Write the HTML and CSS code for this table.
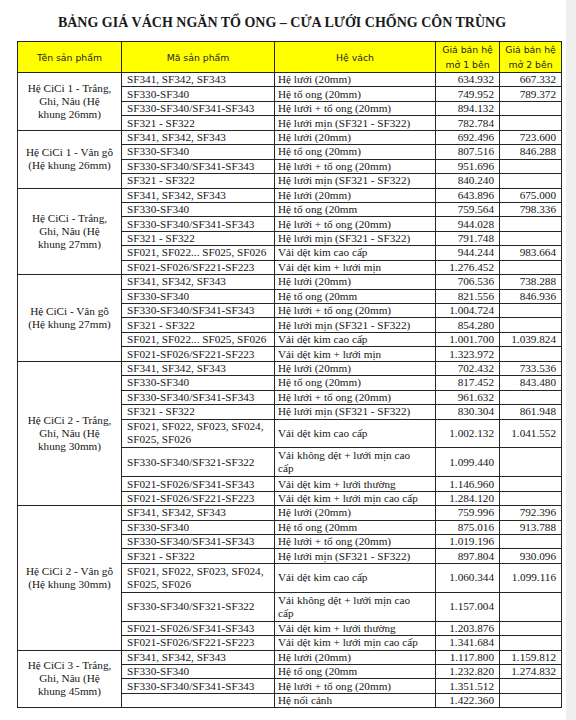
FILE: index.html
```html
<!DOCTYPE html>
<html lang="vi">
<head>
<meta charset="utf-8">
<title>Bảng giá vách ngăn tổ ong</title>
<link rel="stylesheet" href="styles.css">
</head>
<body>
<div class="page">
  <h1 class="title">BẢNG GIÁ VÁCH NGĂN TỔ ONG – CỬA LƯỚI CHỐNG CÔN TRÙNG</h1>
  <table class="price">
    <thead>
      <tr class="head">
        <th class="w1">Tên sản phẩm</th>
        <th class="w2">Mã sản phẩm</th>
        <th class="w3">Hệ vách</th>
        <th class="w4">Giá bán hệ<br>mở 1 bên</th>
        <th class="w5">Giá bán hệ<br>mở 2 bên</th>
      </tr>
    </thead>
    <tbody>
      <tr class="r"><td class="grp" rowspan="4">Hệ CiCi 1 - Trắng,<br>Ghi, Nâu (Hệ<br>khung 26mm)</td><td class="code">SF341, SF342, SF343</td><td class="sys">Hệ lưới (20mm)</td><td class="num">634.932</td><td class="num">667.332</td></tr>
      <tr class="r"><td class="code">SF330-SF340</td><td class="sys">Hệ tổ ong (20mm)</td><td class="num">749.952</td><td class="num">789.372</td></tr>
      <tr class="r"><td class="code">SF330-SF340/SF341-SF343</td><td class="sys">Hệ lưới + tổ ong (20mm)</td><td class="num">894.132</td><td class="num"></td></tr>
      <tr class="r"><td class="code">SF321 - SF322</td><td class="sys">Hệ lưới mịn (SF321 - SF322)</td><td class="num">782.784</td><td class="num"></td></tr>

      <tr class="r"><td class="grp" rowspan="4">Hệ CiCi 1 - Vân gỗ<br>(Hệ khung 26mm)</td><td class="code">SF341, SF342, SF343</td><td class="sys">Hệ lưới (20mm)</td><td class="num">692.496</td><td class="num">723.600</td></tr>
      <tr class="r"><td class="code">SF330-SF340</td><td class="sys">Hệ tổ ong (20mm)</td><td class="num">807.516</td><td class="num">846.288</td></tr>
      <tr class="r"><td class="code">SF330-SF340/SF341-SF343</td><td class="sys">Hệ lưới + tổ ong (20mm)</td><td class="num">951.696</td><td class="num"></td></tr>
      <tr class="r"><td class="code">SF321 - SF322</td><td class="sys">Hệ lưới mịn (SF321 - SF322)</td><td class="num">840.240</td><td class="num"></td></tr>

      <tr class="r"><td class="grp" rowspan="6">Hệ CiCi - Trắng,<br>Ghi, Nâu (Hệ<br>khung 27mm)</td><td class="code">SF341, SF342, SF343</td><td class="sys">Hệ lưới (20mm)</td><td class="num">643.896</td><td class="num">675.000</td></tr>
      <tr class="r"><td class="code">SF330-SF340</td><td class="sys">Hệ tổ ong (20mm</td><td class="num">759.564</td><td class="num">798.336</td></tr>
      <tr class="r"><td class="code">SF330-SF340/SF341-SF343</td><td class="sys">Hệ lưới + tổ ong (20mm)</td><td class="num">944.028</td><td class="num"></td></tr>
      <tr class="r"><td class="code">SF321 - SF322</td><td class="sys">Hệ lưới mịn (SF321 - SF322)</td><td class="num">791.748</td><td class="num"></td></tr>
      <tr class="r"><td class="code">SF021, SF022... SF025, SF026</td><td class="sys">Vải dệt kim cao cấp</td><td class="num">944.244</td><td class="num">983.664</td></tr>
      <tr class="r"><td class="code">SF021-SF026/SF221-SF223</td><td class="sys">Vải dệt kim + lưới mịn</td><td class="num">1.276.452</td><td class="num"></td></tr>

      <tr class="r"><td class="grp" rowspan="6">Hệ CiCi - Vân gỗ<br>(Hệ khung 27mm)</td><td class="code">SF341, SF342, SF343</td><td class="sys">Hệ lưới (20mm)</td><td class="num">706.536</td><td class="num">738.288</td></tr>
      <tr class="r"><td class="code">SF330-SF340</td><td class="sys">Hệ tổ ong (20mm</td><td class="num">821.556</td><td class="num">846.936</td></tr>
      <tr class="r"><td class="code">SF330-SF340/SF341-SF343</td><td class="sys">Hệ lưới + tổ ong (20mm)</td><td class="num">1.004.724</td><td class="num"></td></tr>
      <tr class="r"><td class="code">SF321 - SF322</td><td class="sys">Hệ lưới mịn (SF321 - SF322)</td><td class="num">854.280</td><td class="num"></td></tr>
      <tr class="r"><td class="code">SF021, SF022... SF025, SF026</td><td class="sys">Vải dệt kim cao cấp</td><td class="num">1.001.700</td><td class="num">1.039.824</td></tr>
      <tr class="r"><td class="code">SF021-SF026/SF221-SF223</td><td class="sys">Vải dệt kim + lưới mịn</td><td class="num">1.323.972</td><td class="num"></td></tr>

      <tr class="r"><td class="grp" rowspan="8">Hệ CiCi 2 - Trắng,<br>Ghi, Nâu (Hệ<br>khung 30mm)</td><td class="code">SF341, SF342, SF343</td><td class="sys">Hệ lưới (20mm)</td><td class="num">702.432</td><td class="num">733.536</td></tr>
      <tr class="r"><td class="code">SF330-SF340</td><td class="sys">Hệ tổ ong (20mm)</td><td class="num">817.452</td><td class="num">843.480</td></tr>
      <tr class="r"><td class="code">SF330-SF340/SF341-SF343</td><td class="sys">Hệ lưới + tổ ong (20mm)</td><td class="num">961.632</td><td class="num"></td></tr>
      <tr class="r"><td class="code">SF321 - SF322</td><td class="sys">Hệ lưới mịn (SF321 - SF322)</td><td class="num">830.304</td><td class="num">861.948</td></tr>
      <tr class="d"><td class="code">SF021, SF022, SF023, SF024,<br>SF025, SF026</td><td class="sys">Vải dệt kim cao cấp</td><td class="num">1.002.132</td><td class="num">1.041.552</td></tr>
      <tr class="d"><td class="code">SF330-SF340/SF321-SF322</td><td class="sys">Vải không dệt + lưới mịn cao<br>cấp</td><td class="num">1.099.440</td><td class="num"></td></tr>
      <tr class="r"><td class="code">SF021-SF026/SF341-SF343</td><td class="sys">Vải dệt kim + lưới thường</td><td class="num">1.146.960</td><td class="num"></td></tr>
      <tr class="r"><td class="code">SF021-SF026/SF221-SF223</td><td class="sys">Vải dệt kim + lưới mịn cao cấp</td><td class="num">1.284.120</td><td class="num"></td></tr>

      <tr class="r"><td class="grp" rowspan="8">Hệ CiCi 2 - Vân gỗ<br>(Hệ khung 30mm)</td><td class="code">SF341, SF342, SF343</td><td class="sys">Hệ lưới (20mm)</td><td class="num">759.996</td><td class="num">792.396</td></tr>
      <tr class="r"><td class="code">SF330-SF340</td><td class="sys">Hệ tổ ong (20mm</td><td class="num">875.016</td><td class="num">913.788</td></tr>
      <tr class="r"><td class="code">SF330-SF340/SF341-SF343</td><td class="sys">Hệ lưới + tổ ong (20mm)</td><td class="num">1.019.196</td><td class="num"></td></tr>
      <tr class="r"><td class="code">SF321 - SF322</td><td class="sys">Hệ lưới mịn (SF321 - SF322)</td><td class="num">897.804</td><td class="num">930.096</td></tr>
      <tr class="d"><td class="code">SF021, SF022, SF023, SF024,<br>SF025, SF026</td><td class="sys">Vải dệt kim cao cấp</td><td class="num">1.060.344</td><td class="num">1.099.116</td></tr>
      <tr class="d"><td class="code">SF330-SF340/SF321-SF322</td><td class="sys">Vải không dệt + lưới mịn cao<br>cấp</td><td class="num">1.157.004</td><td class="num"></td></tr>
      <tr class="r"><td class="code">SF021-SF026/SF341-SF343</td><td class="sys">Vải dệt kim + lưới thường</td><td class="num">1.203.876</td><td class="num"></td></tr>
      <tr class="r"><td class="code">SF021-SF026/SF221-SF223</td><td class="sys">Vải dệt kim + lưới mịn cao cấp</td><td class="num">1.341.684</td><td class="num"></td></tr>

      <tr class="r"><td class="grp" rowspan="4">Hệ CiCi 3 - Trắng,<br>Ghi, Nâu (Hệ<br>khung 45mm)</td><td class="code">SF341, SF342, SF343</td><td class="sys">Hệ lưới (20mm)</td><td class="num">1.117.800</td><td class="num">1.159.812</td></tr>
      <tr class="r"><td class="code">SF330-SF340</td><td class="sys">Hệ tổ ong (20mm</td><td class="num">1.232.820</td><td class="num">1.274.832</td></tr>
      <tr class="r"><td class="code">SF330-SF340/SF341-SF343</td><td class="sys">Hệ lưới + tổ ong (20mm)</td><td class="num">1.351.512</td><td class="num"></td></tr>
      <tr class="r"><td class="code"></td><td class="sys">Hệ nối cảnh</td><td class="num">1.422.360</td><td class="num"></td></tr>
    </tbody>
  </table>
</div>
</body>
</html>
```

FILE: styles.css
```css
html {
  background: #efefef;
}
body {
  margin: 0;
}
.page {
  width: 566px;
  min-height: 720px;
  background: #ffffff;
  padding: 13px 0 0 17px;
  box-sizing: border-box;
  color: #151515;
}
.title {
  width: 530px;
  margin: 0 14px 9px 0;
  text-align: center;
  font-family: "Liberation Serif", "Times New Roman", serif;
  font-weight: bold;
  font-size: 14px;
  line-height: 19px;
  color: #1a1a1a;
}
.price {
  width: 544px;
  border-collapse: collapse;
  table-layout: fixed;
  font-family: "Liberation Serif", "Times New Roman", serif;
  font-size: 11.2px;
}
.price th,
.price td {
  border: 1px solid #262626;
  padding: 0;
  line-height: 13px;
  white-space: nowrap;
  overflow: hidden;
}
.price .w1 { width: 103px; }
.price .w2 { width: 152px; }
.price .w3 { width: 160px; }
.price .w4 { width: 63px; }
.price .w5 { width: 61px; }
.head {
  height: 29px;
}
.price .head th {
  background: #ffff00;
  font-family: "DejaVu Sans", Verdana, sans-serif;
  font-weight: normal;
  font-size: 9.3px;
  line-height: 15px;
  text-align: center;
  vertical-align: middle;
  color: #222222;
}
.r {
  height: 14.45px;
}
.d {
  height: 28.9px;
}
.price .grp {
  text-align: center;
  vertical-align: middle;
  line-height: 13px;
}
.price .code {
  padding-left: 5px;
  vertical-align: middle;
}
.price .sys {
  padding-left: 3px;
  vertical-align: middle;
}
.price .num {
  text-align: right;
  padding-right: 5px;
  vertical-align: middle;
}
```
